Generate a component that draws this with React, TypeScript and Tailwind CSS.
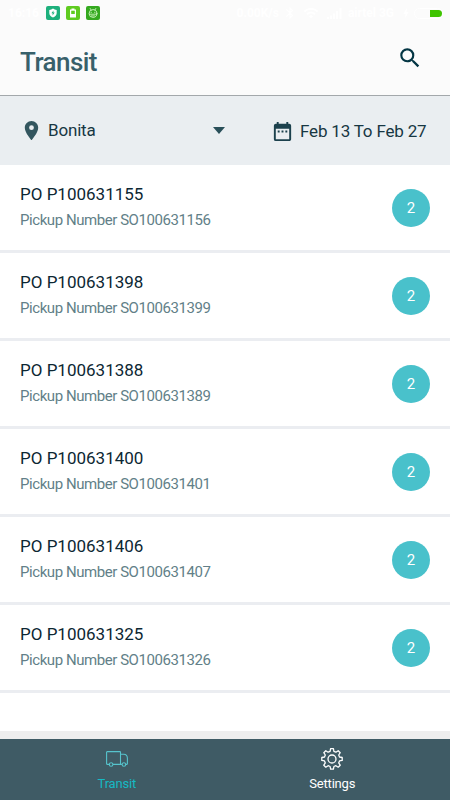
import React from "react";
import { MdBluetooth, MdBolt, MdDateRange, MdLocationOn, MdSearch, MdWifi } from "react-icons/md";

type Order = {
  po: string;
  pickup: string;
  count: number;
};

const orders: Order[] = [
  { po: "P100631155", pickup: "SO100631156", count: 2 },
  { po: "P100631398", pickup: "SO100631399", count: 2 },
  { po: "P100631388", pickup: "SO100631389", count: 2 },
  { po: "P100631400", pickup: "SO100631401", count: 2 },
  { po: "P100631406", pickup: "SO100631407", count: 2 },
  { po: "P100631325", pickup: "SO100631326", count: 2 },
];

const ShieldBadge = () => (
  <svg viewBox="0 0 14 14" className="h-3.5 w-3.5">
    <rect width="14" height="14" rx="2" fill="#1db07c" />
    <path d="M7 2.6c1.2.9 2.3 1.2 3.7 1.3v3.2c0 2.2-1.5 3.5-3.7 4.4-2.2-.9-3.7-2.2-3.7-4.4V3.9c1.4-.1 2.5-.4 3.7-1.3z" fill="#fff" />
    <path d="M7.5 4.5 5.4 7.3h1.3L6.5 9.5l2.2-2.9H7.3z" fill="#1db07c" />
  </svg>
);

const BatteryBadge = () => (
  <svg viewBox="0 0 14 14" className="h-3.5 w-3.5">
    <rect width="14" height="14" rx="2" fill="#5fcb1f" />
    <path d="M5.5 2.5h3v1H10v8H4v-8h1.5z" fill="#fff" />
    <path d="M5.2 4.7h3.6V8H5.2z" fill="#5fcb1f" />
  </svg>
);

const DroidBadge = () => (
  <svg viewBox="0 0 14 14" className="h-3.5 w-3.5">
    <rect width="14" height="14" rx="2" fill="#34a91f" />
    <g fill="none" stroke="#c9f2ba" strokeWidth="0.9" strokeLinecap="round">
      <path d="m4.2 2.5 1 1.6M9.8 2.5l-1 1.6" />
      <circle cx="7" cy="7.5" r="3.9" />
      <path d="M3.3 8.2h7.4M5.2 6.2v.4M8.8 6.2v.4M5.5 9.9h3" />
    </g>
  </svg>
);

const SignalIcon = () => (
  <svg viewBox="0 0 15 11" fill="currentColor" className="ml-2 h-[11px] w-[15px]">
    <path d="M0 9h2v2H0zM3 7.5h2V11H3zM6 5.5h2V11H6zM9 3h2v8H9zM12.5 0h2v11h-2z" />
  </svg>
);

const TruckIcon = () => (
  <svg viewBox="0 0 22 16" fill="none" stroke="currentColor" strokeWidth="1.1" className="h-4 w-[22px]">
    <path d="M3.2 13.4H1.2a.6.6 0 0 1-.6-.6V1.2a.6.6 0 0 1 .6-.6h12.7a.6.6 0 0 1 .6.6v12.2H7" />
    <path d="M14.5 3.2h3.3c2.2 0 3.6 1.9 3.6 4.2v5.4a.6.6 0 0 1-.6.6h-.9M14.500 13.400h1.400" />
    <circle cx="5.1" cy="13.5" r="1.8" />
    <circle cx="17.9" cy="13.5" r="1.8" />
  </svg>
);

const GearIcon = () => (
  <svg viewBox="0 0 24 24" fill="none" stroke="currentColor" strokeWidth="1.3" strokeLinejoin="round" className="h-6 w-6">
    <path d="M10.6 1.7h2.8l.5 2.7 2 .8 2.3-1.5 2 2-1.5 2.3.8 2 2.7.5v2.900l-2.700.5-.8 2 1.500 2.300-2 2-2.300-1.500-2 .8-.5 2.700h-2.800l-.5-2.700-2-.8-2.300 1.500-2-2 1.500-2.300-.8-2-2.700-.5v-2.900l2.700-.5.8-2-1.500-2.300 2-2 2.300 1.500 2-.8z" />
    <circle cx="12" cy="12" r="4" />
  </svg>
);

const StatusBar = () => (
  <div className="flex h-[26px] items-center justify-between pr-[7px] pl-2 text-[12px] leading-none font-bold text-white">
    <div className="flex items-center">
      <span className="w-[38px]">16:16</span>
      <div className="flex gap-1.5">
        <ShieldBadge />
        <BatteryBadge />
        <DroidBadge />
      </div>
    </div>
    <div className="flex items-center">
      <span>0.00K/s</span>
      <MdBluetooth className="ml-1 size-3.5" />
      <MdWifi className="ml-1.5 size-4" />
      <SignalIcon />
      <span className="ml-1.5">airtel 3G</span>
      <MdBolt className="ml-1.5 size-3" />
      <div className="ml-0.5 flex h-[11px] w-[29px] items-center justify-end rounded-full border border-white">
        <div className="h-[7px] w-3 rounded-r-full bg-[#3fc400]" />
      </div>
    </div>
  </div>
);

const Header = () => (
  <header className="h-24 shrink-0 border-b border-[#a3a8ab] bg-[#fbfbfb]">
    <StatusBar />
    <div className="flex items-start justify-between pr-[27px] pl-5">
      <h1 className="mt-5 text-[26px] leading-8 font-medium tracking-[-0.55px] text-[#38606a]">Transit</h1>
      <MdSearch className="mt-[19px] size-[26px] text-[#033543]" />
    </div>
  </header>
);

const Filters = () => (
  <div className="flex h-[69px] shrink-0 items-center bg-[#eaeef1] text-[17px] tracking-[-0.18px] text-[#173743]">
    <div className="flex w-[225px] items-center pl-5">
      <MdLocationOn className="size-[23px] text-[#33565f]" />
      <span className="ml-[5px]">Bonita</span>
      <svg viewBox="0 0 12 7" className="ml-auto h-[7px] w-3">
        <path d="M0 0h12L6 7z" fill="#294f59" />
      </svg>
    </div>
    <div className="flex flex-1 items-center pt-0.5 pl-[46px]">
      <MdDateRange className="size-[23px] text-[#1c414d]" />
      <span className="ml-1.5 whitespace-nowrap">Feb 13 To Feb 27</span>
    </div>
  </div>
);

const OrderRow = ({ order }: { order: Order }) => (
  <li className="flex h-[88px] items-center justify-between border-b-[3px] border-[#ebedf1] pr-5 pl-5">
    <div className="-mt-0.5">
      <div className="text-[17px] leading-[26px] text-[#0c2733]">PO {order.po}</div>
      <div className="text-[15px] leading-[26px] tracking-[-0.44px] text-[#627f88]">Pickup Number {order.pickup}</div>
    </div>
    <div className="flex size-[38px] items-center justify-center rounded-full bg-[#49c1cb] pt-0.5 text-[15px] text-white">
      {order.count}
    </div>
  </li>
);

const BottomNav = () => (
  <nav className="flex h-[69px] shrink-0 border-t-8 border-[#eeeeee] bg-[#3f5b65] text-[13px] tracking-[-0.2px]">
    <div className="flex flex-1 flex-col items-center pl-[9px] text-[#16b9c4]">
      <div className="flex h-[39px] items-center pt-px text-[#56c4cd]">
        <TruckIcon />
      </div>
      <span className="leading-3">Transit</span>
    </div>
    <div className="flex flex-1 flex-col items-center pr-[10px] text-white">
      <div className="flex h-[39px] items-center pt-px">
        <GearIcon />
      </div>
      <span className="leading-3">Settings</span>
    </div>
  </nav>
);

export default function App() {
  return (
    <div className="flex h-[800px] w-[450px] flex-col overflow-hidden bg-white font-[Roboto,sans-serif]">
      <Header />
      <Filters />
      <ul className="flex-1">
        {orders.map((order) => (
          <OrderRow key={order.po} order={order} />
        ))}
      </ul>
      <BottomNav />
    </div>
  );
}
